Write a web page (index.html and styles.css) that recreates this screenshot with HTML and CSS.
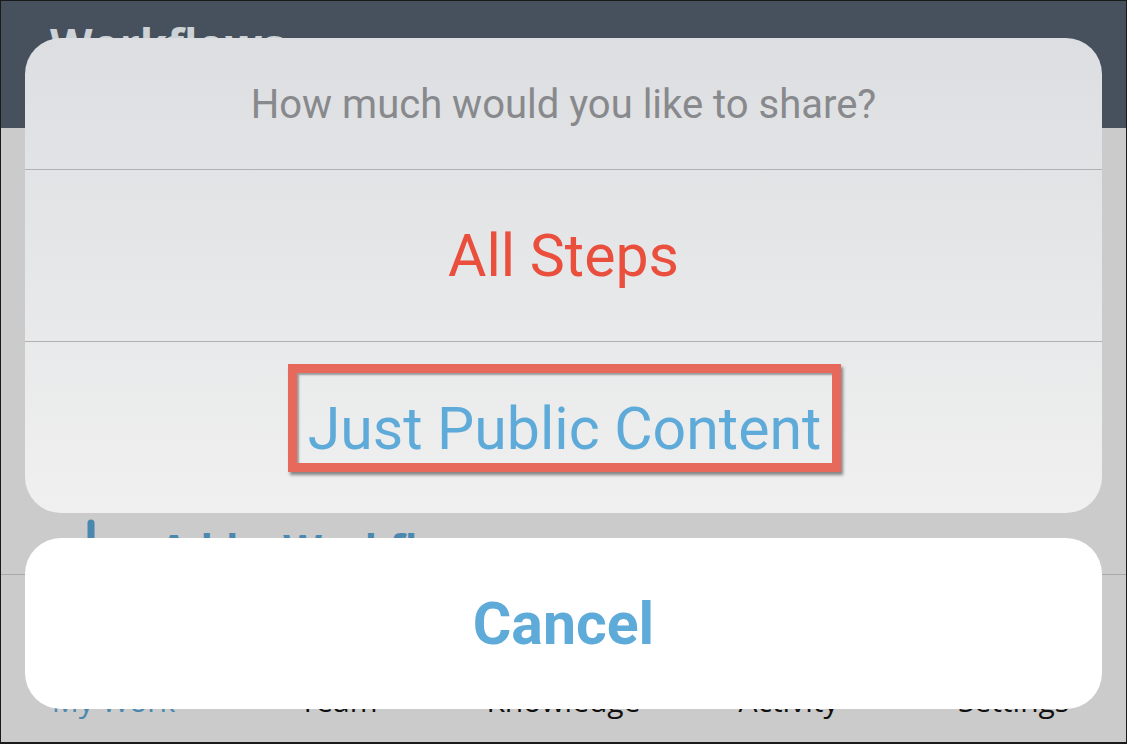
FILE: index.html
```html
<!DOCTYPE html>
<html lang="en">
<head>
  <meta charset="UTF-8">
  <meta name="viewport" content="width=device-width, initial-scale=1.0">
  <title>Workflows - Share</title>
  <link rel="stylesheet" href="styles.css">
</head>
<body>

  <!-- Phone screen frame -->
  <div class="screen">

    <!-- Page header behind the sheet -->
    <header class="top-bar">
      <h1>Workflows</h1>
    </header>

    <!-- Workflow list -->
    <main class="list">
      <div class="list-row">
        <svg class="plus" width="50" height="50" viewBox="0 0 50 50">
          <path d="M25 4 V46 M4 25 H46" stroke="#4a88b0" stroke-width="7" stroke-linecap="round" fill="none"/>
        </svg>
        <span class="row-label">Add a Workflow</span>
      </div>
    </main>

    <!-- Bottom tab bar -->
    <nav class="tab-bar">
      <span class="tab active">My Work</span>
      <span class="tab">Team</span>
      <span class="tab">Knowledge</span>
      <span class="tab">Activity</span>
      <span class="tab">Settings</span>
    </nav>

    <!-- Action sheet overlay -->
    <div class="overlay">
      <div class="sheet">
        <div class="sheet-title">How much would you like to share?</div>
        <div class="sheet-option danger">All Steps</div>
        <div class="sheet-option highlight-row">
          <span class="highlight">Just Public Content</span>
        </div>
      </div>
      <div class="cancel">Cancel</div>
    </div>

  </div>

</body>
</html>
```

FILE: styles.css
```css
body {
  margin: 0;
  background: #cbcbcb;
}

.screen {
  position: relative;
  width: 1127px;
  height: 744px;
  box-sizing: border-box;
  border: 1px solid #1a1a1a;
  border-bottom-width: 2px;
  background: #cbcbcb;
  display: flex;
  flex-direction: column;
  overflow: hidden;
  font-family: 'Open Sans', sans-serif;
}

/* Header */
.top-bar {
  height: 127px;
  flex-shrink: 0;
  background: #46515d;
  padding: 21px 0 0 49px;
  box-sizing: border-box;
}

.top-bar h1 {
  margin: 0;
  font-size: 44px;
  line-height: 1;
  font-weight: 700;
  color: #cdd2d6;
}

/* List */
.list {
  flex: 1;
  padding-top: 381px;
}

.list-row {
  display: flex;
  align-items: flex-start;
  height: 55px;
  padding: 10px 0 0 65px;
  border-bottom: 1px solid #a9a9a9;
}

.plus {
  flex-shrink: 0;
}

.row-label {
  margin: 9px 0 0 44px;
  font-size: 40px;
  line-height: 1;
  font-weight: 700;
  color: #4a88b0;
}

/* Tab bar */
.tab-bar {
  height: 56px;
  flex-shrink: 0;
  display: grid;
  grid-template-columns: repeat(5, 1fr);
}

.tab {
  text-align: center;
  font-size: 30px;
  line-height: 30px;
  color: #111;
}

.tab.active {
  color: #4a88b0;
}

/* Action sheet */
.overlay {
  position: absolute;
  inset: 0;
  padding: 37px 24px 0;
  display: flex;
  flex-direction: column;
  gap: 25px;
  font-family: Roboto, sans-serif;
}

.sheet {
  height: 475px;
  border-radius: 36px;
  background: linear-gradient(#dcdee1, #f0f0f0);
  display: flex;
  flex-direction: column;
  overflow: hidden;
}

.sheet-title {
  height: 132px;
  display: flex;
  align-items: center;
  justify-content: center;
  padding-top: 2px;
  box-sizing: border-box;
  font-size: 40px;
  color: #88898c;
  border-bottom: 1px solid #b1b1b4;
}

.sheet-option {
  height: 171px;
  display: flex;
  align-items: center;
  justify-content: center;
  font-size: 59px;
  color: #5eaad8;
}

.sheet-option.danger {
  color: #ea4f3d;
  border-bottom: 1px solid #b1b1b4;
}

.sheet-option.highlight-row {
  flex: 1;
  align-items: flex-start;
  padding-top: 22px;
  padding-left: 2px;
}

/* Red annotation box */
.highlight {
  display: block;
  height: 68px;
  padding: 22px 11px 0;
  line-height: 68px;
  border: 9px solid #e6695b;
  box-shadow: 2px 3px 3px rgba(0, 0, 0, 0.45), inset 2px 2px 2px rgba(0, 0, 0, 0.35);
}

.cancel {
  height: 171px;
  border-radius: 36px;
  background: #fff;
  display: flex;
  align-items: center;
  justify-content: center;
  font-size: 59px;
  font-weight: 700;
  color: #5eaad8;
}
```
